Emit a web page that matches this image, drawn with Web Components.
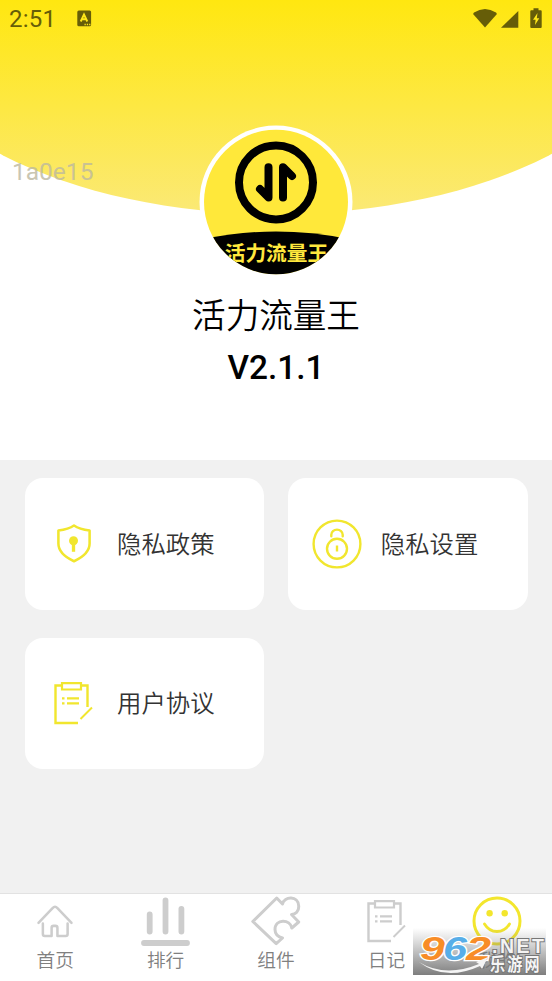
<!DOCTYPE html>
<html lang="zh-CN">
<head>
<meta charset="utf-8">
<meta name="viewport" content="width=device-width">
<title>活力流量王</title>
<style>
html,body{margin:0;background:#fff}
body{font-family:Roboto,"Noto Sans CJK SC",sans-serif;width:552px;height:981px;overflow:hidden}
</style>
</head>
<body>
<app-screen></app-screen>
<script>
const define = (name, html) => customElements.define(name, class extends HTMLElement {
  constructor() {
    super();
    const t = document.createElement('template');
    t.innerHTML = html;
    this.attachShadow({mode: 'open'}).append(t.content.cloneNode(true));
  }
});

const clipboard = `<g fill="none" stroke="currentColor"><path d="M7 3.500H1.500V41H24M26 3.500H33.500V25" stroke-width="2.400"/><path d="M8 1.200H27V7.500H8Z" stroke-width="2.200"/><path d="M13 16.300H25M13 21.300H25M8 16.300H10.500M8 21.300H10.500" stroke-width="2.200"/><path d="M26.500 37L38 25.500" stroke-width="2"/></g>`;
const ICONS = {
  shield: ['0 0 36 40', '<path d="M18 1.500C13 5 7 6 2 6.600V20C2 29 10 34.500 18 38.200C26 34.500 34 29 34 20V6.600C29 6 23 5 18 1.500Z" fill="none" stroke="currentColor" stroke-width="2.600" stroke-linejoin="round"/><circle cx="17.500" cy="17.200" r="4.600" fill="currentColor"/><path d="M17.500 18V28.500" stroke="currentColor" stroke-width="3.400"/>'],
  lock: ['0 0 50 50', '<g fill="none" stroke="currentColor" stroke-width="2.400"><circle cx="25" cy="25" r="23.400"/><circle cx="25" cy="29.800" r="10"/><path d="M19.300 17.300V15.800A5.700 5.200 0 0 1 30.700 15.800V17.300" stroke-linecap="round"/><path d="M25 26.500V32.500"/></g>'],
  doc: ['0 0 38 43', clipboard],
  home: ['0 0 36 34', '<g fill="none" stroke="currentColor" stroke-width="2.600" stroke-linecap="round" stroke-linejoin="round"><path d="M1 18.500L15.500 3.200Q18 .600 20.500 3.200L35 18.500"/><path d="M5.500 19V30Q5.500 32 7.500 32H14.500V23.500Q14.500 21.500 16.500 21.500H18.500Q20.500 21.500 20.500 23.500V32H29Q31 32 31 30V19"/></g>'],
  rank: ['0 0 49 49', '<g stroke="currentColor" stroke-linecap="round" stroke-width="5.800"><path d="M8.700 17.500V34.500M24.500 3.300V34.500M40.400 11.800V34.500M3 46H46"/></g>'],
  puzzle: ['0 0 50 50', '<path d="M1.800 25.500L25.700 2L31.500 8C33 0 47.500-.500 47.700 10C48 15.500 44.500 18.500 40.500 18.500L47.700 26L40.800 32C39.500 23 24 22.500 24 33.500C24 38.500 27.500 41 31.500 42L25.200 47.700Z" fill="none" stroke="currentColor" stroke-width="3" stroke-linejoin="round"/>'],
  smile: ['0 0 50 50', '<circle cx="25" cy="25" r="23" fill="none" stroke="currentColor" stroke-width="3"/><circle cx="17.600" cy="17.300" r="3.200" fill="currentColor"/><circle cx="32.700" cy="17.300" r="3.200" fill="currentColor"/><path d="M12.500 28Q17 35.500 25 35.500T37.500 28" fill="none" stroke="currentColor" stroke-width="2.800" stroke-linecap="round"/>']
};

customElements.define('app-icon', class extends HTMLElement {
  connectedCallback() {
    if (this.shadowRoot) return;
    const [box, body] = ICONS[this.getAttribute('name')];
    this.attachShadow({mode: 'open'}).innerHTML =
      `<style>:host{display:block;flex:none}svg{display:block;width:100%;height:100%;overflow:visible}</style><svg viewBox="${box}">${body}</svg>`;
  }
});

define('status-bar', `<style>
:host{display:flex;justify-content:space-between;height:38px;color:#665d08}
.time{display:flex;font:400 24px/39px Roboto,sans-serif;padding-left:9px;gap:21px;letter-spacing:.2px}
svg{display:block}
.time svg{margin-top:10px}
</style>
<div class="time"><span>2:51</span><svg width="15" height="17" viewBox="0 0 15 17"><rect x=".3" y=".5" width="13.800" height="15.700" rx="1.500" fill="currentColor"/><path d="M3.700 11.500L7 4.500L10.300 11.500M5 9.300H9" fill="none" stroke="#ffe818" stroke-width="1.900"/><path d="M7.500 14.500H13.500" stroke="#ffe818" stroke-width="1.300" stroke-dasharray="1.300 1"/></svg></div>
<svg width="110" height="38" viewBox="442 0 110 38"><g fill="#665d08"><path d="M485 27.500L473.500 14.500Q472.800 13.300 474 12.500Q485 5.500 496 12.500Q497.200 13.300 496.500 14.500L485 27.500Z"/><path d="M501 27.700H518.300V11Z"/><path d="M531.300 10.200H533.500V8.200H538.500V10.200H540.700Q541.700 10.200 541.700 11.200V27Q541.700 28 540.700 28H531.300Q530.300 28 530.300 27V11.200Q530.300 10.200 531.300 10.200Z"/></g><path d="M537.500 13L533 19.800H535.600L535 25L539.300 18.300H536.800Z" fill="#ffe818"/></svg>`);

define('app-logo', `<style>
:host{display:block;width:154px;height:154px}
svg{display:block;width:100%;height:100%}
text{font:700 20.700px "Noto Sans CJK SC",sans-serif;fill:#ffe83d}
</style>
<svg viewBox="199 125 154 154"><defs><clipPath id="c"><ellipse cx="276" cy="202" rx="72" ry="72.300"/></clipPath></defs>
<circle cx="276" cy="202" r="76.500" fill="#fff"/>
<g clip-path="url(#c)"><path fill="#ffe83a" d="M200 125H352V279H200Z"/><path d="M199 240Q276 223 353 240V280H199Z"/><text x="224.700" y="260.500" textLength="103.500">活力流量王</text></g>
<circle cx="276" cy="182.400" r="37" fill="none" stroke="#000" stroke-width="8"/>
<g fill="none" stroke="#000" stroke-width="8" stroke-linecap="round" stroke-linejoin="round"><path d="M268.500 167.200V197.500L260 189M283 197.500V167.200L292 176"/></g></svg>`);

define('profile-header', `<style>
:host{display:block;position:relative;height:460px;background:#fff;overflow:hidden}
.curve{position:absolute;left:-110px;top:0;width:772px;height:213.500px;background:linear-gradient(#ffe710,#fbe976);border-radius:0 0 50% 50%/0 0 200px 200px}
.body{position:relative;display:flex;flex-direction:column;height:100%}
.id{position:absolute;left:12px;top:157px;font:400 24.500px/30px Roboto,sans-serif;color:#bdb9a0;opacity:.8}
app-logo{align-self:center;margin-top:87px}
h1{margin:11px 0 0;text-align:center;font:350 33.600px/48px "Noto Sans CJK SC DemiLight","Noto Sans CJK SC",sans-serif;color:#000}
h2{margin:9px 0 0;text-align:center;font:500 33.400px/42px Roboto,sans-serif;color:#000}
</style>
<div class="curve"></div>
<div class="body"><status-bar></status-bar><app-logo></app-logo><h1><slot name="title"></slot></h1><h2><slot name="version"></slot></h2></div>
<div class="id"><slot name="id"></slot></div>`);

define('menu-card', `<style>
:host{display:flex;align-items:center;gap:24px;height:131.500px;box-sizing:border-box;padding-left:24px;background:#fff;border-radius:18px}
.icon{width:50px;display:flex;justify-content:center;color:#f1e62e}
.label{font:350 24.400px/36px "Noto Sans CJK SC DemiLight","Noto Sans CJK SC",sans-serif;color:#333;margin:-2px 0 0 -5.500px}
</style><div class="icon"><slot name="icon"></slot></div><div class="label"><slot></slot></div>`);

define('tab-item', `<style>
:host{display:flex;flex-direction:column;align-items:center;color:#cdcdcd}
:host([active]){color:#f3e62d}
.icon{height:54px;display:flex;align-items:center}
.label{font:350 18.700px/22px "Noto Sans CJK SC DemiLight","Noto Sans CJK SC",sans-serif;color:#808080}
</style><div class="icon"><slot name="icon"></slot></div><div class="label"><slot></slot></div>`);

define('tab-bar', `<style>
:host{display:grid;grid-template-columns:repeat(5,1fr);height:88px;box-sizing:border-box;background:#fff;border-top:1px solid #e2e2e2}
</style><slot></slot>`);

define('site-mark', `<style>
:host{display:block;width:133px;height:55px;overflow:hidden}
svg{display:block}
text{font-family:"Liberation Sans",sans-serif;font-weight:700}
.cn{font:700 18px "Noto Sans CJK SC",sans-serif}
</style>
<svg width="133" height="55" viewBox="0 0 133 55"><defs><linearGradient id="g" x2="0" y2="1"><stop offset="0" stop-color="#777" stop-opacity="0"/><stop offset=".25" stop-color="#777" stop-opacity=".22"/><stop offset="1" stop-color="#747474" stop-opacity=".93"/></linearGradient></defs>
<rect y="8" width="133" height="47" fill="url(#g)"/>
<g font-size="34" font-style="italic" stroke="#fff" stroke-width="2.500" paint-order="stroke"><text x="7" y="39.500" textLength="25" lengthAdjust="spacingAndGlyphs" fill="#f88d27">9</text><text x="30" y="39.500" textLength="24" lengthAdjust="spacingAndGlyphs" fill="#58aee8">6</text><text x="53" y="39.500" textLength="25" lengthAdjust="spacingAndGlyphs" fill="#f88d27">2</text></g>
<text x="79" y="33" font-size="19.500" textLength="52" lengthAdjust="spacing" fill="#f3f3f3" stroke="#777" stroke-width="2" paint-order="stroke">.NET</text>
<path d="M6 42Q32 58 66 44L63 42L75 37L69 49L67 46Q32 62 6 42Z" fill="#f4f4f4"/>
<text class="cn" transform="translate(77 51) scale(.840 1)" textLength="59" fill="#f5f5f5" stroke="#777" stroke-width="2" paint-order="stroke">乐游网</text></svg>`);

define('app-screen', `<style>
:host{display:flex;flex-direction:column;position:relative;width:552px;height:981px;background:#fff}
.grid{flex:1;background:#f1f1f1;display:grid;grid-template-columns:1fr 1fr;gap:28px 24.500px;align-content:start;padding:18px 24.500px}
.s1{width:36px;height:39px}.s2{width:50px;height:50px}.s3{width:38px;height:43px}
menu-card .s3{margin-right:2px}
.home{width:36px;height:33px}.rank{width:49px;height:49px}.big{width:50px;height:50px}
site-mark{position:absolute;left:413px;top:920px}
</style>
<profile-header><span slot="id">1a0e15</span><span slot="title">活力流量王</span><span slot="version">V2.1.1</span></profile-header>
<div class="grid">
<menu-card><app-icon slot="icon" class="s1" name="shield"></app-icon>隐私政策</menu-card>
<menu-card><app-icon slot="icon" class="s2" name="lock"></app-icon>隐私设置</menu-card>
<menu-card><app-icon slot="icon" class="s3" name="doc"></app-icon>用户协议</menu-card>
</div>
<tab-bar>
<tab-item><app-icon slot="icon" class="home" name="home"></app-icon>首页</tab-item>
<tab-item><app-icon slot="icon" class="rank" name="rank"></app-icon>排行</tab-item>
<tab-item><app-icon slot="icon" class="big" name="puzzle"></app-icon>组件</tab-item>
<tab-item><app-icon slot="icon" class="s3" name="doc"></app-icon>日记</tab-item>
<tab-item active><app-icon slot="icon" class="big" name="smile"></app-icon>我的</tab-item>
</tab-bar>
<site-mark></site-mark>`);
</script>
</body>
</html>
